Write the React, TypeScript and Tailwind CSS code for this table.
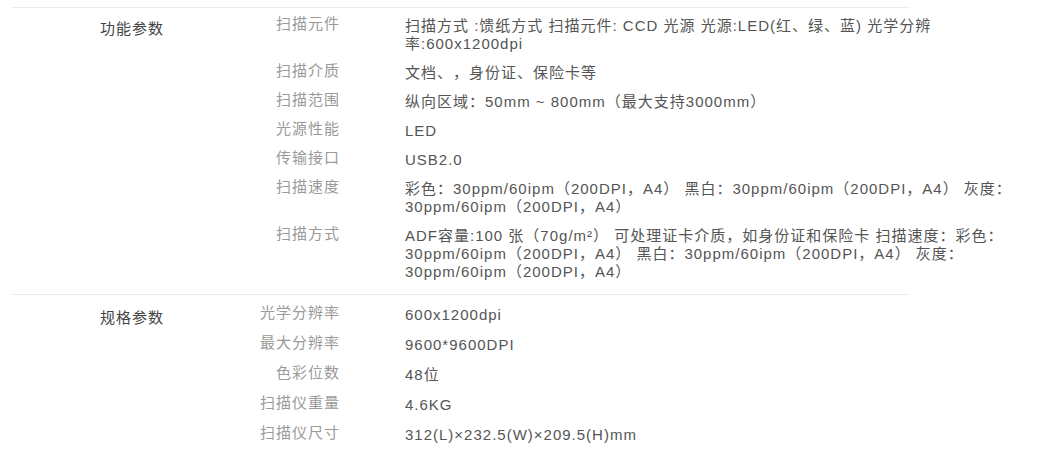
import React from "react";

type Row = { label: string; value: string };

const sections: { title: string; rows: Row[] }[] = [
  {
    title: "功能参数",
    rows: [
      {
        label: "扫描元件",
        value:
          "扫描方式 :馈纸方式 扫描元件: CCD 光源 光源:LED(红、绿、蓝) 光学分辨率:600x1200dpi",
      },
      { label: "扫描介质", value: "文档、，身份证、保险卡等" },
      { label: "扫描范围", value: "纵向区域：50mm ~ 800mm（最大支持3000mm）" },
      { label: "光源性能", value: "LED" },
      { label: "传输接口", value: "USB2.0" },
      {
        label: "扫描速度",
        value:
          "彩色：30ppm/60ipm（200DPI，A4） 黑白：30ppm/60ipm（200DPI，A4） 灰度：30ppm/60ipm（200DPI，A4）",
      },
      {
        label: "扫描方式",
        value:
          "ADF容量:100 张（70g/m²） 可处理证卡介质，如身份证和保险卡 扫描速度：彩色：30ppm/60ipm（200DPI，A4） 黑白：30ppm/60ipm（200DPI，A4） 灰度：30ppm/60ipm（200DPI，A4）",
      },
    ],
  },
  {
    title: "规格参数",
    rows: [
      { label: "光学分辨率", value: "600x1200dpi" },
      { label: "最大分辨率", value: "9600*9600DPI" },
      { label: "色彩位数", value: "48位" },
      { label: "扫描仪重量", value: "4.6KG" },
      { label: "扫描仪尺寸", value: "312(L)×232.5(W)×209.5(H)mm" },
    ],
  },
];

export default function App() {
  return (
    <div
      className="w-[1042px] h-[454px] overflow-hidden bg-white pl-[11px] pt-[7px] text-[15px] leading-[18px] tracking-[1px] [text-spacing-trim:space-all]"
      style={{ fontFamily: '"Liberation Sans", "Noto Sans CJK SC", sans-serif' }}
    >
      {sections.map((s, i) => (
        <div
          key={s.title}
          className={`w-[899px] border-t border-[#ececec] flex ${
            i === 0 ? "pt-[3.5px] pb-[7.5px]" : "pt-[5px]"
          }`}
        >
          <div className="w-[200px] shrink-0 pl-[89px] pt-[8.5px] text-[#444]">
            {s.title}
          </div>
          <div className="flex flex-col">
            {s.rows.map((r) => (
              <div
                key={r.label}
                className={`flex ${i === 0 ? "py-[5.5px]" : "py-[6px]"}`}
              >
                <div className="w-[129px] shrink-0 text-right text-[#9a9a9a] -mt-[2px]">
                  {r.label}
                </div>
                <div className="ml-[65px] w-[612px] shrink-0 text-[#555]">
                  {r.value}
                </div>
              </div>
            ))}
          </div>
        </div>
      ))}
    </div>
  );
}
